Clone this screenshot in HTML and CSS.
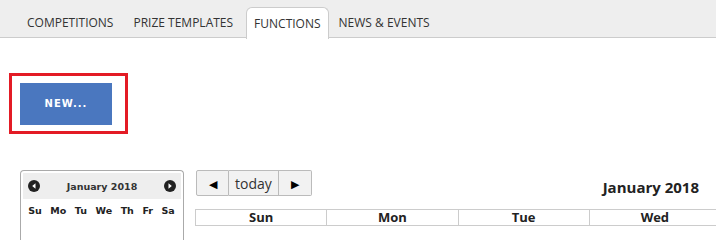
FILE: index.html
```html
<!DOCTYPE html>
<html lang="en">
<head>
  <meta charset="UTF-8">
  <title>Functions</title>
  <link rel="stylesheet" href="styles.css">
</head>
<body>

  <ul class="tabs">
    <li>COMPETITIONS</li>
    <li>PRIZE TEMPLATES</li>
    <li class="active">FUNCTIONS</li>
    <li>NEWS &amp; EVENTS</li>
  </ul>

  <div class="content">
    <div class="highlight">
      <button class="btn-new">NEW...</button>
    </div>

    <div class="calendars">
      <div class="mini-cal">
        <div class="mini-head">
          <span class="circle-btn">
            <svg width="12" height="12" viewBox="0 0 12 12"><circle cx="6" cy="6" r="6" fill="#222"/><path d="M7.5 3.2 L4.2 6 L7.5 8.8 Z" fill="#fff"/></svg>
          </span>
          <span class="mini-title">January 2018</span>
          <span class="circle-btn">
            <svg width="12" height="12" viewBox="0 0 12 12"><circle cx="6" cy="6" r="6" fill="#222"/><path d="M4.5 3.2 L7.8 6 L4.5 8.8 Z" fill="#fff"/></svg>
          </span>
        </div>
        <div class="mini-days">
          <span>Su</span><span>Mo</span><span>Tu</span><span>We</span><span>Th</span><span>Fr</span><span>Sa</span>
        </div>
      </div>

      <div class="full-cal">
        <div class="toolbar">
          <div class="btn-group">
            <button class="fc-btn arrow">&#9664;</button>
            <button class="fc-btn">today</button>
            <button class="fc-btn arrow">&#9654;</button>
          </div>
          <h2 class="cal-title">January 2018</h2>
        </div>
        <div class="grid-wrap">
          <table class="grid">
            <thead>
              <tr>
                <th>Sun</th><th>Mon</th><th>Tue</th><th>Wed</th>
              </tr>
            </thead>
          </table>
        </div>
      </div>
    </div>
  </div>

</body>
</html>
```

FILE: styles.css
```css
html, body {
  overflow: hidden;
}

body {
  margin: 0;
  font-family: "Open Sans", Arial, sans-serif;
  background-color: white;
  color: #222;
}

.tabs {
  list-style: none;
  margin: 0;
  padding: 7px 0 0 17px;
  height: 30px;
  background-color: #eee;
  border-bottom: 1px solid #ccc;
  display: flex;
  font-size: 12px;
}

.tabs li {
  padding: 0 10px;
  line-height: 31px;
  height: 30px;
  color: #333;
}

.tabs li.active {
  background-color: white;
  border: 1px solid #ccc;
  border-bottom: none;
  border-radius: 6px 6px 0 0;
  margin: 0 0 0 3px;
  padding: 0 7px;
  height: 31px;
}

.content {
  padding-top: 35px;
}

.highlight {
  margin-left: 9px;
  height: 55px;
  border: 3px solid #e31b25;
  display: flex;
  align-items: center;
  padding-left: 8px;
  width: 105px;
}

.btn-new {
  width: 92px;
  height: 42px;
  background-color: #4a77bf;
  color: white;
  border: none;
  font-family: "DejaVu Sans", Verdana, sans-serif;
  font-weight: bold;
  font-size: 10px;
  letter-spacing: 1px;
}

.calendars {
  display: flex;
  margin-top: 36px;
}

.mini-cal {
  margin-left: 20px;
  width: 158px;
  height: 70px;
  border: 1px solid #aaa;
  border-bottom: none;
  border-radius: 4px 4px 0 0;
  padding: 2px;
  font-family: "DejaVu Sans", Verdana, sans-serif;
  font-size: 10px;
  font-weight: bold;
}

.mini-head {
  background-color: #eee;
  height: 26px;
  display: flex;
  align-items: center;
  justify-content: space-between;
  padding: 0 5px;
  color: #333;
}

.mini-title {
  font-size: 9.5px;
}

.circle-btn {
  display: flex;
}

.mini-days {
  display: flex;
  justify-content: space-around;
  padding: 6px 2px 0 1px;
  color: #222;
  font-size: 9.5px;
}

.full-cal {
  margin-left: 11px;
  flex: 1;
  min-width: 0;
}

.toolbar {
  display: flex;
  justify-content: space-between;
  align-items: flex-start;
  padding-right: 17px;
}

.btn-group {
  display: flex;
  margin-left: 1px;
}

.fc-btn {
  height: 26px;
  background-color: #f2f2f2;
  border: 1px solid #bbb;
  border-left: none;
  font-family: "Open Sans", Arial, sans-serif;
  font-size: 14px;
  color: #333;
  padding: 0 6px;
}

.fc-btn:first-child {
  border-left: 1px solid #bbb;
  border-radius: 2px 0 0 2px;
}

.fc-btn:last-child {
  border-radius: 0 2px 2px 0;
}

.fc-btn.arrow {
  font-size: 11px;
  width: 33px;
  color: #000;
}

.cal-title {
  margin: 7px 0 0 0;
  font-size: 15px;
  font-weight: bold;
  color: #222;
}

.grid-wrap {
  overflow: hidden;
}

.grid {
  margin-top: 12px;
  border-collapse: collapse;
  table-layout: fixed;
  width: 526px;
}

.grid th {
  border: 1px solid #ccc;
  height: 15px;
  font-size: 13px;
  font-weight: bold;
  padding: 0;
  line-height: 15px;
}
```
